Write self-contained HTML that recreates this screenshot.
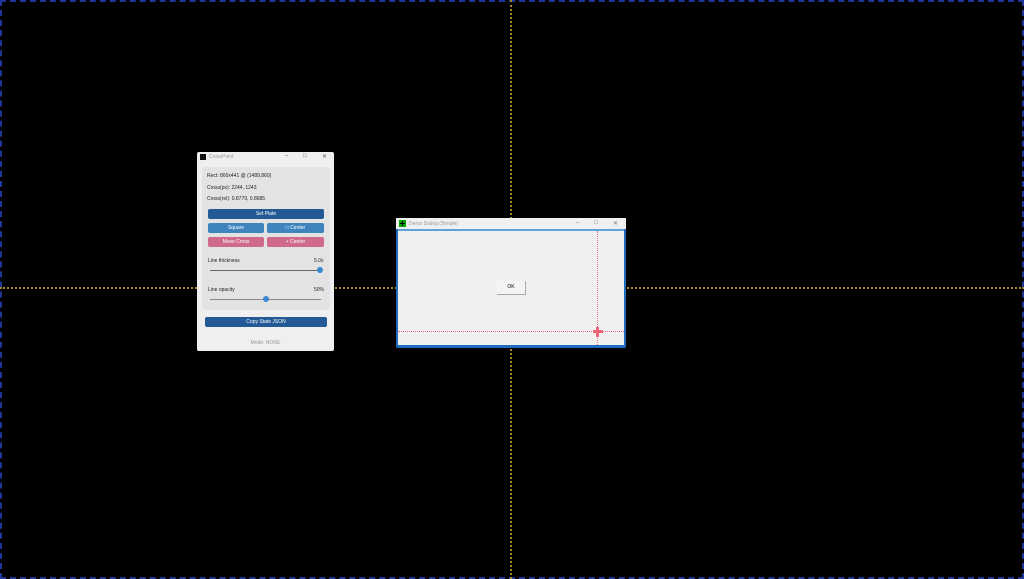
<html><head><style>
body{margin:0;width:1024px;height:579px;background:#000;position:relative;overflow:hidden;font-family:"Liberation Sans",sans-serif}
.a{position:absolute}
.t{font-size:5px;color:#222}
.btn{position:absolute;color:#fff;font-size:5px;text-align:center;border-radius:2px;line-height:10px;height:10px}
</style></head><body>
<div class="a" style="left:0;top:0;width:1020px;height:575px;border:2px dashed #1e3796"></div>
<div class="a" style="left:510px;top:0;width:0;height:579px;border-left:2px dotted #a88526"></div>
<div class="a" style="left:0;top:287px;width:1024px;height:0;border-top:2px dotted #a88526"></div>

<div class="a" style="left:197px;top:152px;width:137px;height:199px;background:#efefef;border-radius:2px">
 <div class="a" style="left:3px;top:2px;width:6px;height:6px;background:#111"></div>
 <div class="a" style="left:12px;top:2px;font-size:5px;color:#999">CrossPoint</div>
 <div class="a" style="left:88px;top:1px;font-size:6px;color:#555">–</div>
 <div class="a" style="left:106px;top:1px;font-size:6px;color:#555">□</div>
 <div class="a" style="left:125px;top:1px;font-size:6px;color:#555">✕</div>
 <div class="a" style="left:5px;top:15px;width:128px;height:143px;background:#e3e3e3;border-radius:3px"></div>
 <div class="a t" style="left:10px;top:21px">Rect: 860x441 @ (1489,860)</div>
 <div class="a t" style="left:10px;top:33px">Cross(px): 2244, 1243</div>
 <div class="a t" style="left:10px;top:44px">Cross(rel): 0.8779, 0.8685</div>
 <div class="btn" style="left:11px;top:57px;width:116px;background:#235a96">Set Plate</div>
 <div class="btn" style="left:11px;top:71px;width:56px;background:#3e85c0">Square</div>
 <div class="btn" style="left:70px;top:71px;width:57px;background:#3e85c0">□ Center</div>
 <div class="btn" style="left:11px;top:85px;width:56px;background:#cf6a8c">Move Cross</div>
 <div class="btn" style="left:70px;top:85px;width:57px;background:#cf6a8c">+ Center</div>
 <div class="a t" style="left:11px;top:106px">Line thickness</div>
 <div class="a t" style="left:117px;top:106px">5.0x</div>
 <div class="a" style="left:13px;top:118px;width:111px;height:1px;background:#666"></div>
 <div class="a" style="left:120px;top:115px;width:6px;height:6px;border-radius:50%;background:#3a88d0"></div>
 <div class="a t" style="left:11px;top:135px">Line opacity</div>
 <div class="a t" style="left:117px;top:135px">50%</div>
 <div class="a" style="left:13px;top:147px;width:111px;height:1px;background:#888"></div>
 <div class="a" style="left:66px;top:144px;width:6px;height:6px;border-radius:50%;background:#3a88d0"></div>
 <div class="btn" style="left:8px;top:165px;width:122px;background:#235a96">Copy State JSON</div>
 <div class="a" style="left:0;top:188px;width:137px;text-align:center;font-size:5px;color:#999">Mode: NONE</div>
</div>

<div class="a" style="left:396px;top:218px;width:230px;height:130px;background:#1f6cbf;border-radius:2px">
 <div class="a" style="left:0;top:0;width:230px;height:11px;background:#f0f0f0"></div>
 <div class="a" style="left:3px;top:2px;width:7px;height:7px;background:#0a0"></div>
 <div class="a" style="left:4px;top:5px;width:5px;height:1px;background:#000"></div>
 <div class="a" style="left:6px;top:3px;width:1px;height:5px;background:#000"></div>
 <div class="a" style="left:13px;top:3px;font-size:5px;color:#999">Demo Dialog (Simple)</div>
 <div class="a" style="left:180px;top:2px;font-size:6px;color:#777">–</div>
 <div class="a" style="left:198px;top:2px;font-size:6px;color:#777">□</div>
 <div class="a" style="left:217px;top:2px;font-size:6px;color:#777">✕</div>
 <div class="a" style="left:2px;top:11px;width:226px;height:116px;background:#f0f0f0;border-top:2px solid #5fa3dc;box-sizing:border-box"></div>
 <div class="a" style="left:101px;top:63px;width:28px;height:13px;background:#f4f4f4;border-right:1px solid #aaa;border-bottom:1px solid #aaa;font-size:5px;text-align:center;line-height:13px">OK</div>
 <div class="a" style="left:201px;top:13px;height:114px;border-left:1px dotted #f06a80"></div>
 <div class="a" style="left:2px;top:113px;width:226px;border-top:1px dotted #f06a80"></div>
 <div class="a" style="left:197px;top:112px;width:10px;height:3px;background:#ee6677"></div>
 <div class="a" style="left:200px;top:109px;width:3px;height:10px;background:#ee6677"></div>
</div>
</body></html>
